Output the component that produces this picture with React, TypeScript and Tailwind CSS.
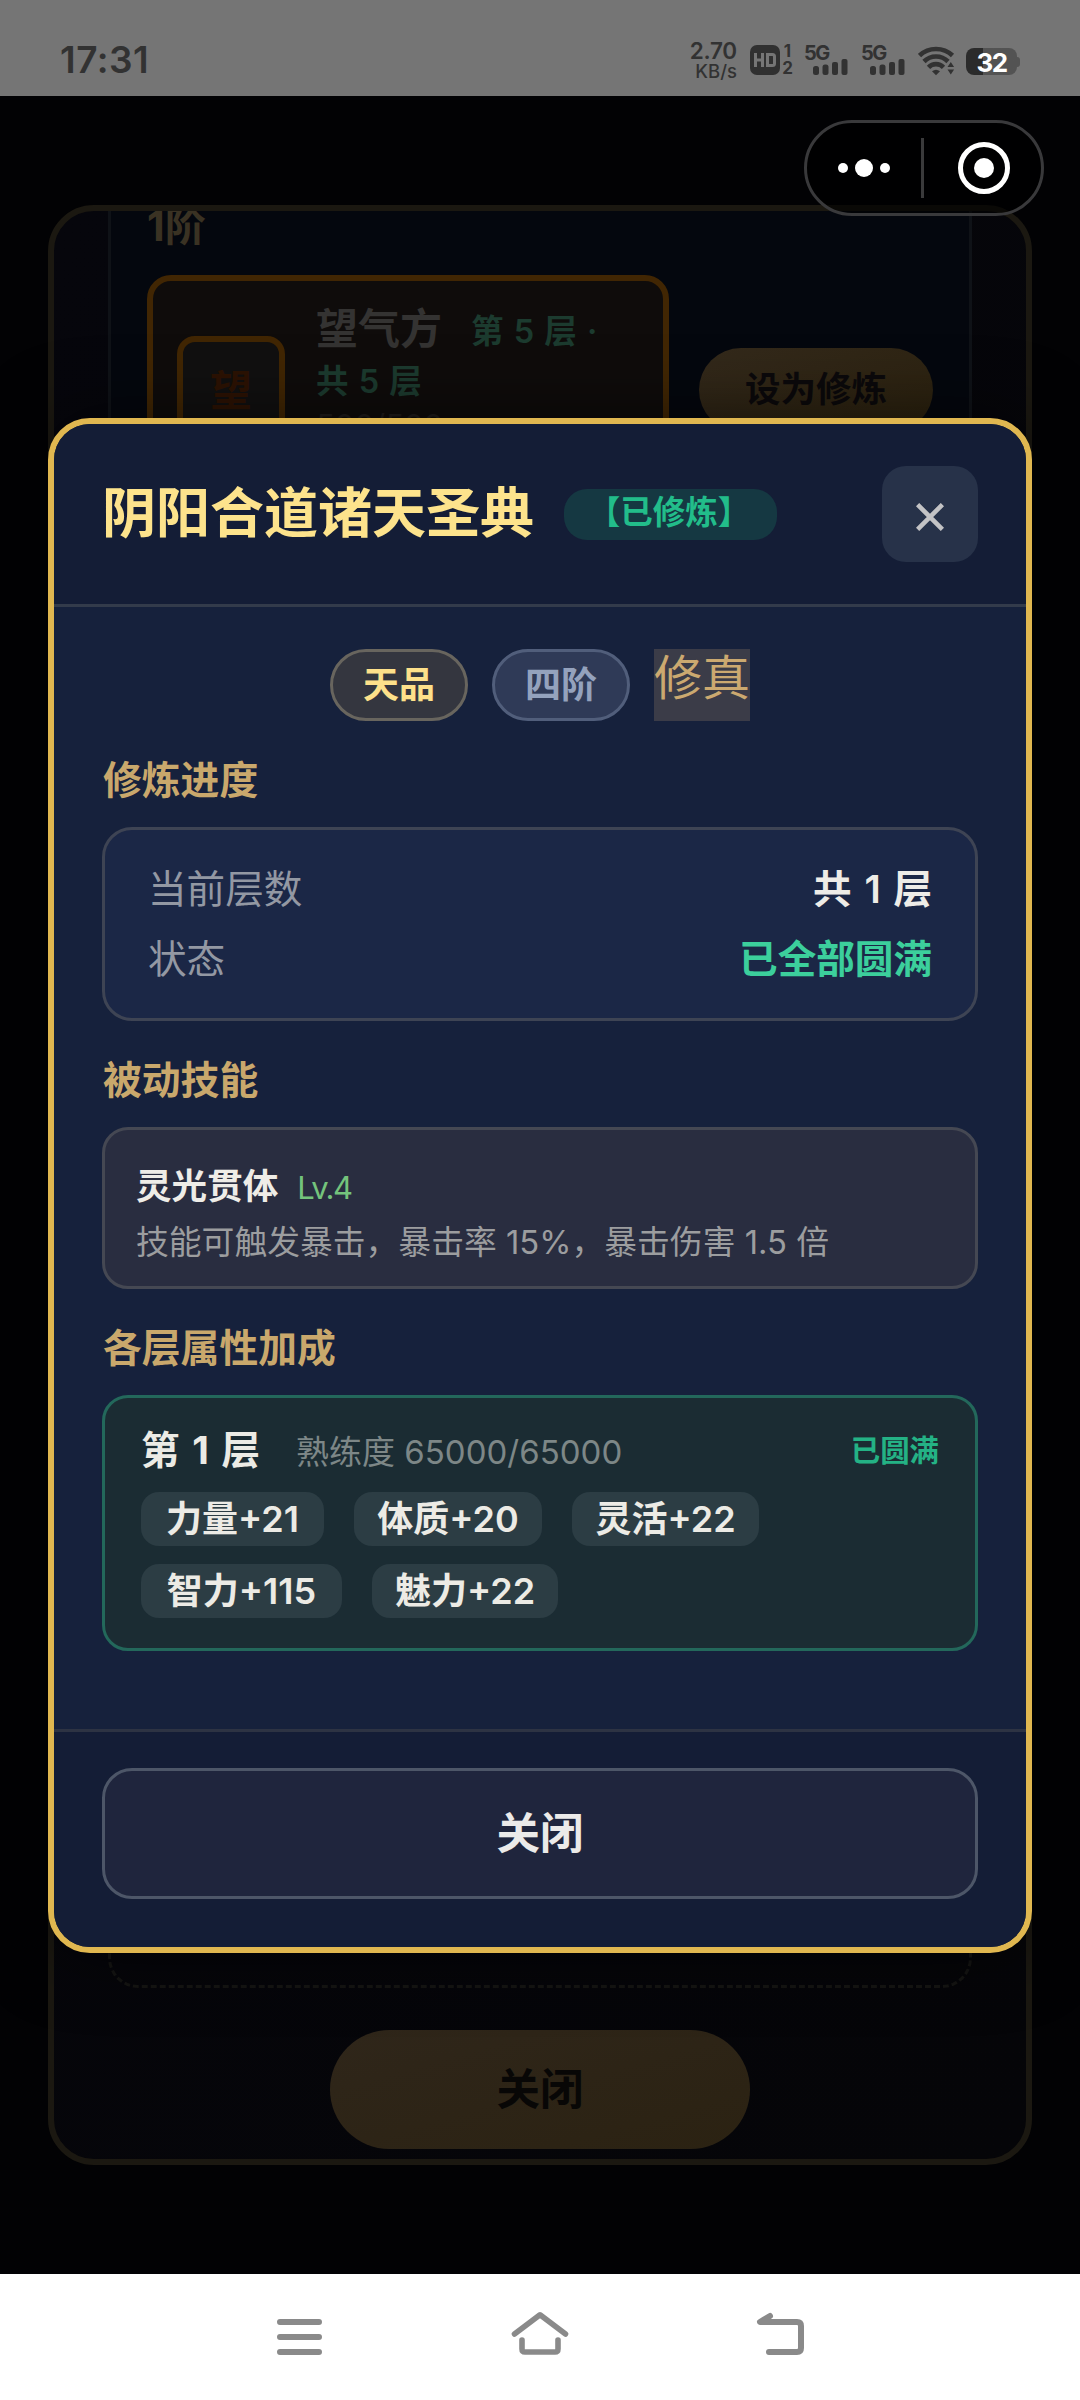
import type { ReactNode } from "react"

type Attr = {
  name: string
  value: number
  width: string
}

const attrs: Attr[] = [
  { name: "力量", value: 21, width: "w-[183px]" },
  { name: "体质", value: 20, width: "w-[188px]" },
  { name: "灵活", value: 22, width: "w-[187px]" },
  { name: "智力", value: 115, width: "w-[201px]" },
  { name: "魅力", value: 22, width: "w-[186px]" },
]

function Signal() {
  return (
    <div className="relative h-[30px] w-[44px]">
      <span className="absolute left-0 top-0 text-[20px] font-bold leading-[16px] tracking-[-1.6px]">5G</span>
      <svg className="absolute left-[9px] top-[14px]" width="35" height="16" viewBox="0 0 35 16" fill="currentColor">
        <rect x="0" y="7" width="6" height="9" rx="2.5" />
        <rect x="9.5" y="5.5" width="6" height="10.5" rx="2.5" />
        <rect x="19" y="3" width="6" height="13" rx="2" />
        <rect x="28.5" y="0" width="6" height="16" rx="2" />
      </svg>
    </div>
  )
}

function StatusBar() {
  return (
    <div className="flex h-24 shrink-0 items-start justify-between bg-[#757575] pl-[60px] pr-[60px] text-[#323232]">
      <div className="mt-[40px] text-[37px] font-semibold leading-[40px] tracking-[0.5px]">17:31</div>
      <div className="mt-[45px] flex items-start">
        <div className="-mt-[4px] flex w-[46px] flex-col items-end font-semibold">
          <span className="text-[22.5px] leading-[20px] tracking-[-0.2px]">2.70</span>
          <span className="mt-[2px] text-[18.5px] font-medium leading-[16px]">KB/s</span>
        </div>
        <div className="ml-[13px] flex h-[30px] w-[30px] items-center justify-center rounded-[7px] bg-[#303030]">
          <svg width="24" height="16" viewBox="0 0 24 16" fill="none" stroke="#757575" strokeWidth="3">
            <path d="M2.5 1v14M9.5 1v14M2.5 8h7M14.5 2.5h5a2 2 0 0 1 2 2v7a2 2 0 0 1-2 2h-5z" />
          </svg>
        </div>
        <div className="ml-[2px] flex w-[11px] flex-col items-center text-[17px] font-bold leading-[17px]">
          <span className="-mt-[2px]">1</span>
          <span>2</span>
        </div>
        <div className="ml-[11px]">
          <Signal />
        </div>
        <div className="ml-[13px]">
          <Signal />
        </div>
        <svg className="ml-[13px] mt-px" width="37" height="30" viewBox="0 0 37 30" fill="none" stroke="#323232" strokeWidth="4.6">
          <path d="M1.5 9.5a24 24 0 0 1 33 0" />
          <path d="M6 15.5a17 17 0 0 1 24 0" />
          <path d="M10.5 21.3a10.5 10.5 0 0 1 15 0" />
          <path d="M14 25.3q4-3 8 0l-4 4z" fill="#323232" stroke="none" />
          <path d="M29.5 21l3.3-5 3.3 5zM29.5 23.5l3.3 5 3.3-5z" fill="#323232" stroke="none" />
        </svg>
        <div className="ml-[11px] mt-[3px] flex items-center">
          <div className="flex h-[27px] w-[51px] items-center justify-center rounded-[8px] bg-linear-to-r from-[#2b2b2b] from-33% to-[#535353] to-33% pt-px text-[26px] font-bold leading-[27px] tracking-[-1.5px] text-white">
            32
          </div>
          <div className="h-[10px] w-[3px] rounded-r-full bg-[#535353]" />
        </div>
      </div>
    </div>
  )
}

// 小程序右上角胶囊按钮
function Capsule() {
  return (
    <div className="absolute left-[804px] top-[24px] flex h-24 w-[240px] items-center rounded-full border-[3px] border-[#39393b] bg-black/60">
      <div className="flex w-[114px] items-center justify-center gap-[7px]">
        <span className="h-[10px] w-[10px] rounded-full bg-white" />
        <span className="h-[18px] w-[18px] rounded-full bg-white" />
        <span className="h-[10px] w-[10px] rounded-full bg-white" />
      </div>
      <div className="h-[60px] w-[3px] bg-[#3a3a3b]" />
      <div className="ml-[34px] flex h-[52px] w-[52px] items-center justify-center rounded-full border-[5px] border-white">
        <div className="h-[20px] w-[20px] rounded-full bg-white" />
      </div>
    </div>
  )
}

// 功法列表（弹窗后面的面板）
function TechniqueList() {
  return (
    <div className="mx-[48px] mt-[109px] flex h-[1960px] flex-col overflow-hidden rounded-[46px] border-[6px] border-[#1b1811] bg-linear-to-br from-[#06060c] to-[#050508]">
      <div className="mx-[54px] h-[1000px] shrink-0 border-x-[3px] border-[#0f1217] bg-[#04070e] px-[36px]">
        <div className="h-[64px] pt-[1px] text-[41px] font-bold leading-[28px] text-[#3a3223]">1阶</div>
        <div className="flex items-start justify-between">
          <div className="flex h-[230px] w-[522px] rounded-[24px] border-[6px] border-[#412603] bg-[#0f0c0b]">
            <div className="ml-[24px] mt-[55px] flex h-[108px] w-[108px] items-center justify-center rounded-[18px] border-[6px] border-[#412603] bg-[#111010] text-[42px] font-bold text-[#2c1203]">
              望
            </div>
            <div className="ml-[31px] mt-[22px] w-[300px]">
              <div className="flex h-[52px] items-center">
                <span className="text-[42px] font-semibold leading-[52px] text-[#343332]">望气方</span>
                <span className="ml-[29px] mt-[6px] text-[32.5px] font-semibold leading-[46px] text-[#1c3b2f] [word-spacing:2px]">第 5 层 ·</span>
              </div>
              <div className="mt-[4px] text-[32.5px] font-semibold leading-[46px] text-[#1c3b2f] [word-spacing:2px]">共 5 层</div>
              <div className="-mt-[2px] text-[31px] leading-[46px] text-[#1f1c1b]">500/500</div>
            </div>
          </div>
          <button className="mt-[73px] h-[84px] w-[234px] rounded-full bg-linear-to-br from-[#33291b] to-[#2b210d] text-[35.5px] font-semibold text-[#0b090b]">
            设为修炼
          </button>
        </div>
      </div>
      <div className="mx-[54px] h-[777px] shrink-0 rounded-b-[30px] border-[3px] border-t-0 border-dashed border-[#151513]" />
      <button className="mx-auto mt-[42px] h-[119px] w-[420px] shrink-0 rounded-full bg-linear-to-br from-[#2f261a] to-[#2b2212] text-[43.5px] font-bold text-[#080706]">
        关闭
      </button>
    </div>
  )
}

function SectionTitle({ children }: { children: ReactNode }) {
  return <div className="pl-px pt-px text-[38.8px] font-semibold leading-[47px] text-[#c9a86c]">{children}</div>
}

function DetailModal() {
  return (
    <div className="absolute left-[48px] top-[322px] flex h-[1535px] w-[984px] flex-col overflow-hidden rounded-[42px] border-[6px] border-[#e0b750] bg-[#16213c] shadow-[0_0_70px_rgba(0,0,0,0.55)]">
      <div className="flex h-[183px] shrink-0 items-center border-b-[3px] border-[#333b4b] bg-[#141d36] px-[48px]">
        <div className="text-[54px] font-bold leading-[64px] text-[#fde38c]">阴阳合道诸天圣典</div>
        <div className="ml-[30px] flex h-[51px] w-[213px] items-center justify-center rounded-[23px] bg-[#153842] pb-[2px] pr-[3px] text-[32.5px] font-semibold text-[#22bd8a]">
          【已修炼】
        </div>
        <button className="ml-auto flex h-24 w-24 items-center justify-center rounded-[24px] bg-[#273249]">
          <svg className="mt-[6px]" width="28" height="28" viewBox="0 0 28 28" stroke="#c3c3c5" strokeWidth="4.6">
            <path d="M1.6 1.6l24.8 24.8M26.4 1.6L1.6 26.4" />
          </svg>
        </button>
      </div>

      <div className="flex-1 px-[48px] pt-[42px]">
        <div className="flex h-[72px] justify-center gap-6">
          <span className="flex w-[138px] items-center justify-center rounded-full border-[3px] border-[#68655e] bg-[#34363f] text-[36px] font-bold text-[#fde08a]">
            天品
          </span>
          <span className="flex w-[138px] items-center justify-center rounded-full border-[3px] border-[#515e7b] bg-[#2f3a57] text-[36px] font-semibold text-[#94a2bd]">
            四阶
          </span>
          <span className="bg-[#3b3c48] text-[48px] leading-[58px] text-[#cba970]">修真</span>
        </div>

        <div className="mt-[34px]">
          <SectionTitle>修炼进度</SectionTitle>
        </div>
        <div className="mt-[24px] h-[194px] rounded-[30px] border-[3px] border-[#3e4454] bg-[#1b2746] px-[43px] pt-[24px] text-[38.6px] leading-[70px]">
          <div className="flex justify-between">
            <span className="text-[#9398a3]">当前层数</span>
            <span className="font-semibold text-[#eeece7] [word-spacing:3px]">共 1 层</span>
          </div>
          <div className="flex justify-between">
            <span className="text-[#9398a3]">状态</span>
            <span className="font-semibold text-[#3ccf9c]">已全部圆满</span>
          </div>
        </div>

        <div className="mt-[34px]">
          <SectionTitle>被动技能</SectionTitle>
        </div>
        <div className="mt-[24px] h-[162px] rounded-[26px] border-[3px] border-[#454853] bg-[#292d40] px-[31px] pt-[30px]">
          <div className="flex items-baseline leading-[54px]">
            <span className="text-[35.6px] font-bold text-[#eeece7]">灵光贯体</span>
            <span className="ml-[19px] text-[31px] tracking-[-1.6px] text-[#74c37c]">Lv.4</span>
          </div>
          <div className="text-[32.8px] leading-[54px] text-[#9c9d9f]">技能可触发暴击，暴击率 15%，暴击伤害 1.5 倍</div>
        </div>

        <div className="mt-[34px]">
          <SectionTitle>各层属性加成</SectionTitle>
        </div>
        <div className="mt-[24px] h-[256px] rounded-[26px] border-[3px] border-[#23685b] bg-[#1b2c33] pl-[36px] pr-[36px] pt-[28px]">
          <div className="flex h-[50px] items-center">
            <span className="text-[38.6px] font-bold text-[#ecebe5] [word-spacing:3.5px]">第 1 层</span>
            <span className="ml-[36px] mt-[4px] text-[33px] text-[#7d8787]">熟练度 65000/65000</span>
            <span className="ml-auto text-[29.4px] font-semibold text-[#24b285]">已圆满</span>
          </div>
          <div className="mt-[16px] flex flex-wrap gap-x-[30px] gap-y-[18px]">
            {attrs.map((attr) => (
              <span
                key={attr.name}
                className={`flex h-[54px] items-center justify-center rounded-[18px] bg-[#2c3d44] text-[36px] font-semibold text-[#ecebe5] ${attr.width}`}
              >
                {attr.name}+{attr.value}
              </span>
            ))}
          </div>
        </div>
      </div>

      <div className="h-[218px] shrink-0 border-t-[3px] border-[#2d3343] bg-[#141d36] px-[48px] pt-[36px]">
        <button className="h-[131px] w-full rounded-[30px] border-[3px] border-[#4d5668] bg-[#1f253d] text-[43.5px] font-bold text-[#ebeae9]">
          关闭
        </button>
      </div>
    </div>
  )
}

function NavBar() {
  return (
    <div className="flex h-[126px] shrink-0 items-start justify-between bg-white px-[275px] pt-[36px]">
      <svg width="49" height="48" viewBox="0 0 49 48" stroke="#8a8a8a" strokeWidth="6" strokeLinecap="round">
        <path d="M5 12h39M5 27h39M5 42h39" />
      </svg>
      <svg width="60" height="48" viewBox="0 0 60 48" fill="none" stroke="#8a8a8a" strokeWidth="5.6" strokeLinecap="round" strokeLinejoin="round">
        <path d="M4.5 24L30 4.8L55.5 24" />
        <path d="M12 30v9q0 3 3 3h30q3 0 3-3v-9" />
      </svg>
      <svg width="49" height="48" viewBox="0 0 49 48" fill="none" stroke="#8a8a8a" strokeWidth="6" strokeLinecap="round" strokeLinejoin="round">
        <path d="M14 6L4 12h37q4 0 4 4v22q0 4-4 4H13" />
      </svg>
    </div>
  )
}

export default function App() {
  return (
    <div className="flex h-[2400px] w-[1080px] flex-col overflow-hidden bg-[#020204] font-['Inter','Noto_Sans_CJK_SC',sans-serif]">
      <StatusBar />
      <div className="relative flex flex-1 flex-col overflow-hidden">
        <TechniqueList />
        <DetailModal />
        <Capsule />
      </div>
      <NavBar />
    </div>
  )
}
